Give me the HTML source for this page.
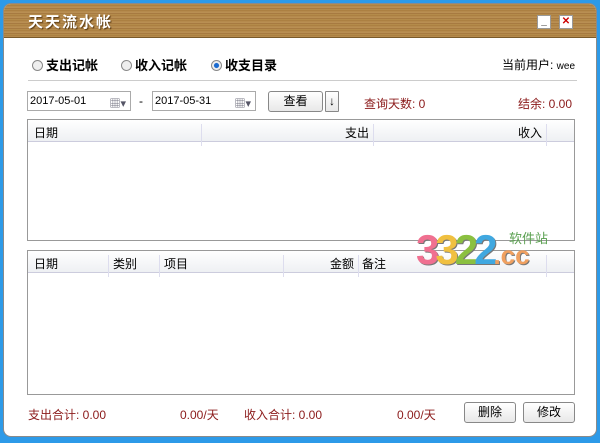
<!DOCTYPE html>
<html><head><meta charset="utf-8"><style>
*{margin:0;padding:0;box-sizing:border-box}
body{width:600px;height:443px;background:#2d9ae8;position:relative;overflow:hidden;font-family:"Liberation Sans","Noto Sans CJK SC",sans-serif;font-size:12px;color:#000}
.win{position:absolute;left:3px;top:3px;width:594px;height:434px;background:#fff;border:1px solid #8a8a8a;border-radius:8px;overflow:hidden}
.title{position:absolute;left:0;top:0;width:100%;height:34px;background:repeating-linear-gradient(180deg,#b8904f 0,#a87a3e 2px,#c29a5c 3px,#9e7038 5px);border-bottom:1px solid #7a5a2a}
.title span{position:absolute;left:24px;top:7px;color:#fff;font-size:15px;font-weight:bold;letter-spacing:2px;text-shadow:1px 1px 1px #5a3a10}
.tb{position:absolute;top:11px;width:14px;height:14px;background:#fff;border:1px solid #999;font-size:10px;text-align:center;line-height:12px;font-weight:bold}
.a{position:absolute;white-space:nowrap}
.r{width:11px;height:11px;border:1px solid #888;border-radius:50%;background:#eee;display:inline-block;vertical-align:-1px;margin-right:3px}
.red{color:#8b1a1a}
.inp{position:absolute;height:20px;border:1px solid #aaa;background:#fff;padding:3px 2px;font-size:11px}
.btn{position:absolute;border:1px solid #888;border-radius:3px;background:linear-gradient(#fff,#e8e8e8);text-align:center}
.tbl{position:absolute;border:1px solid #999;background:#fff}
.hd{position:absolute;left:0;top:0;width:100%;height:22px;background:linear-gradient(#fff,#eef0f3);border-bottom:1px solid #ccd}
.hd div{position:absolute;top:4px}
.sep{position:absolute;top:0;width:1px;height:22px;background:#dde}
</style></head><body>
<div class="win">
<div class="title"><span>天天流水帐</span>
<div class="tb" style="left:533px">_</div><div class="tb" style="left:555px;color:#c00">✕</div></div>
<div class="a" style="left:28px;top:51px;font-size:13px;font-weight:bold"><span class="r"></span>支出记帐</div>
<div class="a" style="left:117px;top:51px;font-size:13px;font-weight:bold"><span class="r"></span>收入记帐</div>
<div class="a" style="left:207px;top:51px;font-size:13px;font-weight:bold"><span class="r" style="background:radial-gradient(#1a6ad0 35%,#eee 45%)"></span>收支目录</div>
<div class="a" style="left:498px;top:52px;font-size:12px">当前用户: <span style="font-size:10px">wee</span></div>
<div class="a" style="left:24px;top:76px;width:549px;height:1px;background:#ccc"></div>
<div class="inp" style="left:23px;top:87px;width:104px">2017-05-01<span style="position:absolute;right:4px;top:3px;color:#556">▦▾</span></div>
<div class="a" style="left:135px;top:90px">-</div>
<div class="inp" style="left:148px;top:87px;width:104px">2017-05-31<span style="position:absolute;right:4px;top:3px;color:#556">▦▾</span></div>
<div class="btn" style="left:264px;top:87px;width:55px;height:21px;line-height:19px">查看</div>
<div class="btn" style="left:321px;top:87px;width:14px;height:21px;line-height:19px;border-radius:1px">↓</div>
<div class="a red" style="left:360px;top:91px">查询天数: 0</div>
<div class="a red" style="left:514px;top:91px">结余: 0.00</div>
<div class="tbl" style="left:23px;top:115px;width:548px;height:122px"><div class="hd">
<div style="left:6px">日期</div><div class="sep" style="left:173px"></div>
<div style="left:317px">支出</div><div class="sep" style="left:345px"></div>
<div style="left:490px">收入</div><div class="sep" style="left:518px"></div></div></div>
<div class="tbl" style="left:23px;top:246px;width:548px;height:145px"><div class="hd">
<div style="left:6px">日期</div><div class="sep" style="left:80px"></div>
<div style="left:85px">类别</div><div class="sep" style="left:131px"></div>
<div style="left:136px">项目</div><div class="sep" style="left:255px"></div>
<div style="left:302px">金额</div><div class="sep" style="left:330px"></div>
<div style="left:334px">备注</div><div class="sep" style="left:518px"></div></div></div>
<div class="a" style="left:412px;top:222px;font-size:42px;font-weight:bold;color:#f0c040;letter-spacing:-4px;text-shadow:1px 1px 0 #777"><span style="color:#f07090">3</span>3<span style="color:#8bc040">2</span><span style="color:#40a8e0">2</span><span style="color:#f0a060;font-size:26px;letter-spacing:0">.cc</span></div>
<div class="a" style="left:505px;top:224px;color:#5aa050;font-size:13px">软件站</div>
<div class="a red" style="left:24px;top:402px">支出合计: 0.00</div>
<div class="a red" style="left:176px;top:402px">0.00/天</div>
<div class="a red" style="left:240px;top:402px">收入合计: 0.00</div>
<div class="a red" style="left:393px;top:402px">0.00/天</div>
<div class="btn" style="left:460px;top:398px;width:52px;height:21px;line-height:19px">删除</div>
<div class="btn" style="left:519px;top:398px;width:52px;height:21px;line-height:19px">修改</div>
</div>
</body></html>
